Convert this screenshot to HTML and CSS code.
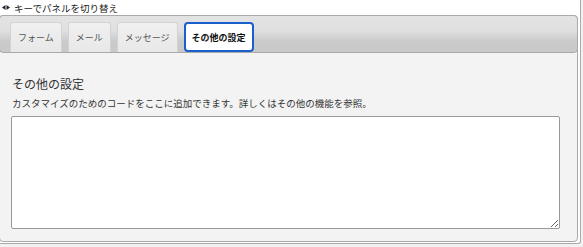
FILE: index.html
```html
<!DOCTYPE html>
<html lang="ja">
<head>
    <meta charset="UTF-8">
    <meta name="viewport" content="width=device-width, initial-scale=1.0">
    <title>その他の設定</title>
    <link rel="stylesheet" href="styles.css">
</head>
<body>
    <div class="wrap">
        <div class="hint">
            <svg class="hint-icon" width="8" height="5" viewBox="0 0 8 5">
                <polygon points="0,2.5 3.5,0 3.5,5" fill="#222"/>
                <polygon points="8,2.5 4.5,0 4.5,5" fill="#222"/>
            </svg>
            キーでパネルを切り替え
        </div>

        <div class="tabs">
            <ul class="tabs-nav">
                <li class="tab">フォーム</li>
                <li class="tab">メール</li>
                <li class="tab">メッセージ</li>
                <li class="tab active">その他の設定</li>
            </ul>

            <div class="panel">
                <h2>その他の設定</h2>
                <p class="desc">カスタマイズのためのコードをここに追加できます。詳しくはその他の機能を参照。</p>
                <textarea class="code"></textarea>
            </div>
        </div>
    </div>
</body>
</html>
```

FILE: styles.css
```css
:root {
    --border-color: #aaa;
    --panel-bg: #f3f3f3;
    --text-color: #333;
    --focus-color: #1a5fcc;
}

body {
    font-family: "Noto Sans CJK JP", "Noto Sans", sans-serif;
    margin: 0;
    background-color: #f1f1f1;
    color: var(--text-color);
}

.wrap {
    width: 580px;
    height: 243px;
    background: #fff;
    border-right: 1px solid var(--border-color);
    border-bottom: 1px solid var(--border-color);
    border-bottom-right-radius: 3px;
}

.hint {
    height: 15px;
    line-height: 14px;
    font-size: 9.5px;
    padding-left: 2px;
    color: #222;
    display: flex;
    align-items: center;
    gap: 4px;
}

.tabs {
    margin-left: -1px;
    width: 577px;
    height: 225px;
    border: 1px solid var(--border-color);
    border-radius: 4px;
    background: var(--panel-bg);
}

.tabs-nav {
    list-style: none;
    margin: -1px -1px 0 -1px;
    padding: 6px 0 0 10px;
    box-sizing: border-box;
    height: 38px;
    display: flex;
    align-items: flex-end;
    gap: 6px;
    border: 1px solid var(--border-color);
    border-radius: 4px;
    background: linear-gradient(#e3e3e3, #e0e0e0 40%, #cacaca 70%, #c9c9c9);
}

.tab {
    box-sizing: border-box;
    height: 30px;
    padding: 0 7px;
    display: flex;
    align-items: center;
    font-size: 9px;
    color: #555;
    border: 1px solid #d3d3d3;
    border-bottom: none;
    border-radius: 3px 3px 0 0;
    background: linear-gradient(#f0f0f0, #e8e8e8);
}

.tab.active {
    border: 2px solid var(--focus-color);
    border-radius: 4px;
    background: #fff;
    color: #111;
    font-weight: bold;
    padding: 0 6px;
}

.panel {
    padding: 22px 16px 12px 12px;
}

.panel h2 {
    margin: 0;
    font-size: 12px;
    font-weight: normal;
    line-height: 18px;
}

.desc {
    margin: 3px 0 6px;
    font-size: 9.5px;
    line-height: 14px;
}

.code {
    display: block;
    box-sizing: border-box;
    width: 549px;
    height: 113px;
    margin-left: -1px;
    border: 1px solid #999;
    border-radius: 2px;
    background: #fff;
}
```
